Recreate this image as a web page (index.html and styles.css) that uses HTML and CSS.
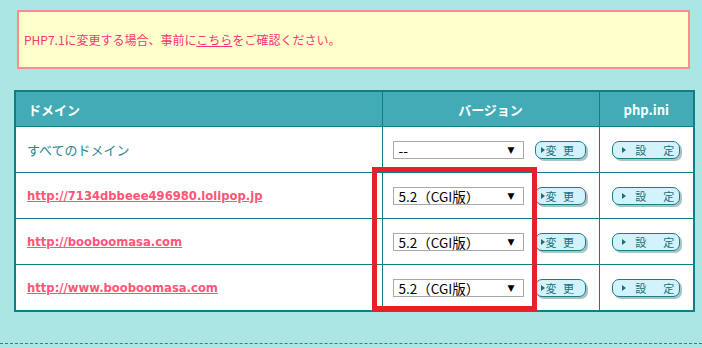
FILE: index.html
```html
<!DOCTYPE html>
<html lang="ja">
<head>
    <meta charset="UTF-8">
    <title>PHP設定</title>
    <link rel="stylesheet" href="styles.css">
</head>
<body>

<div class="notice">
    <p>PHP7.1に変更する場合、事前に<a href="#">こちら</a>をご確認ください。</p>
</div>

<div class="table-wrap">
    <table class="php-table">
        <colgroup>
            <col class="c1">
            <col class="c2">
            <col class="c3">
        </colgroup>
        <thead>
            <tr>
                <th class="col-domain">ドメイン</th>
                <th>バージョン</th>
                <th>php.ini</th>
            </tr>
        </thead>
        <tbody>
            <tr>
                <td class="domain-all">すべてのドメイン</td>
                <td>
                    <div class="version-cell">
                        <div class="select-box"><span>--</span><span class="arrow">▼</span></div>
                        <button class="btn-change"><span class="tri"></span>変 更</button>
                    </div>
                </td>
                <td><button class="btn-setting"><span class="tri"></span>設　定</button></td>
            </tr>
            <tr>
                <td><a class="domain-link" href="#">http://7134dbbeee496980.lolipop.jp</a></td>
                <td>
                    <div class="version-cell">
                        <div class="select-box"><span>5.2（CGI版）</span><span class="arrow">▼</span></div>
                        <button class="btn-change"><span class="tri"></span>変 更</button>
                    </div>
                </td>
                <td><button class="btn-setting"><span class="tri"></span>設　定</button></td>
            </tr>
            <tr>
                <td><a class="domain-link" href="#">http://booboomasa.com</a></td>
                <td>
                    <div class="version-cell">
                        <div class="select-box"><span>5.2（CGI版）</span><span class="arrow">▼</span></div>
                        <button class="btn-change"><span class="tri"></span>変 更</button>
                    </div>
                </td>
                <td><button class="btn-setting"><span class="tri"></span>設　定</button></td>
            </tr>
            <tr>
                <td><a class="domain-link" href="#">http://www.booboomasa.com</a></td>
                <td>
                    <div class="version-cell">
                        <div class="select-box"><span>5.2（CGI版）</span><span class="arrow">▼</span></div>
                        <button class="btn-change"><span class="tri"></span>変 更</button>
                    </div>
                </td>
                <td><button class="btn-setting"><span class="tri"></span>設　定</button></td>
            </tr>
        </tbody>
    </table>
    <!-- annotation box -->
    <div class="highlight"></div>
</div>

<div class="dash-line"></div>

</body>
</html>
```

FILE: styles.css
```css
body {
    margin: 0;
    padding: 0;
    background-color: #abe6e4;
    font-family: "DejaVu Sans", "Noto Sans CJK JP", sans-serif;
    font-size: 12px;
}
.notice {
    margin: 10px 12px 0 17px;
    height: 55px;
    border: 2px solid #ff8c8c;
    background-color: #ffffcc;
    display: flex;
    align-items: center;
}
.notice p {
    margin: 0 0 0 5px;
    color: #ff3377;
    font-family: "Noto Sans CJK JP", sans-serif;
    font-size: 12px;
}
.notice a {
    color: #ff3377;
}
.table-wrap {
    position: relative;
    margin: 21px 9px 0 14px;
}
.php-table {
    width: 679px;
    table-layout: fixed;
    border-collapse: collapse;
    background-color: #fff;
    border: 2px solid #0f7f87;
}
.c1 { width: 367px; }
.c2 { width: 217px; }
.c3 { width: 95px; }
.php-table th, .php-table td {
    border: 1px solid #0f7f87;
    padding: 0;
}
.php-table th {
    height: 34px;
    background-color: #42abb5;
    color: #fff;
    font-family: "Noto Sans CJK JP", sans-serif;
    font-weight: bold;
    font-size: 13px;
}
.php-table th.col-domain {
    text-align: left;
    padding-left: 12px;
}
.php-table td {
    height: 45px;
}
.php-table td:first-child {
    padding-left: 11px;
}
.php-table td:last-child {
    text-align: center;
}
.domain-all {
    color: #2a8696;
    font-family: "Noto Sans CJK JP", sans-serif;
    font-size: 13px;
}
.domain-link {
    color: #ff5577;
    font-weight: bold;
    font-size: 11.6px;
}
.version-cell {
    display: flex;
    align-items: center;
    padding-left: 10px;
    gap: 11px;
}
.select-box {
    width: 116px;
    height: 16px;
    border: 1px solid #a9a9a9;
    background-color: #fff;
    display: flex;
    align-items: center;
    justify-content: space-between;
    padding: 0 8px 0 5px;
    font-family: "Noto Sans CJK JP", sans-serif;
    font-size: 13.5px;
    color: #000;
}
.select-box .arrow {
    font-size: 9px;
    font-family: "DejaVu Sans", sans-serif;
}
.btn-change, .btn-setting {
    height: 18px;
    padding: 0 0 0 10px;
    border: 1.5px solid #1c7d89;
    border-radius: 7px;
    background-color: #d2f3fb;
    box-shadow: 2px 2px 0 #a9c4c6;
    color: #1c6f7a;
    font-family: "Noto Sans CJK JP", sans-serif;
    font-size: 11px;
    line-height: 14px;
    position: relative;
    text-align: left;
    cursor: pointer;
}
.btn-change {
    width: 51px;
    letter-spacing: 2px;
}
.btn-setting {
    width: 68px;
    padding-left: 22px;
    letter-spacing: 3px;
}
.tri {
    position: absolute;
    top: 5px;
    left: 5px;
    width: 0;
    height: 0;
    border-top: 3px solid transparent;
    border-bottom: 3px solid transparent;
    border-left: 4px solid #1c6f7a;
}
.btn-setting .tri {
    left: 9px;
}
.highlight {
    position: absolute;
    left: 358px;
    top: 77px;
    width: 155px;
    height: 134px;
    border: 5px solid #e8202a;
}
.dash-line {
    margin-top: 31px;
    border-top: 1px dashed #1b8a8f;
}
```
